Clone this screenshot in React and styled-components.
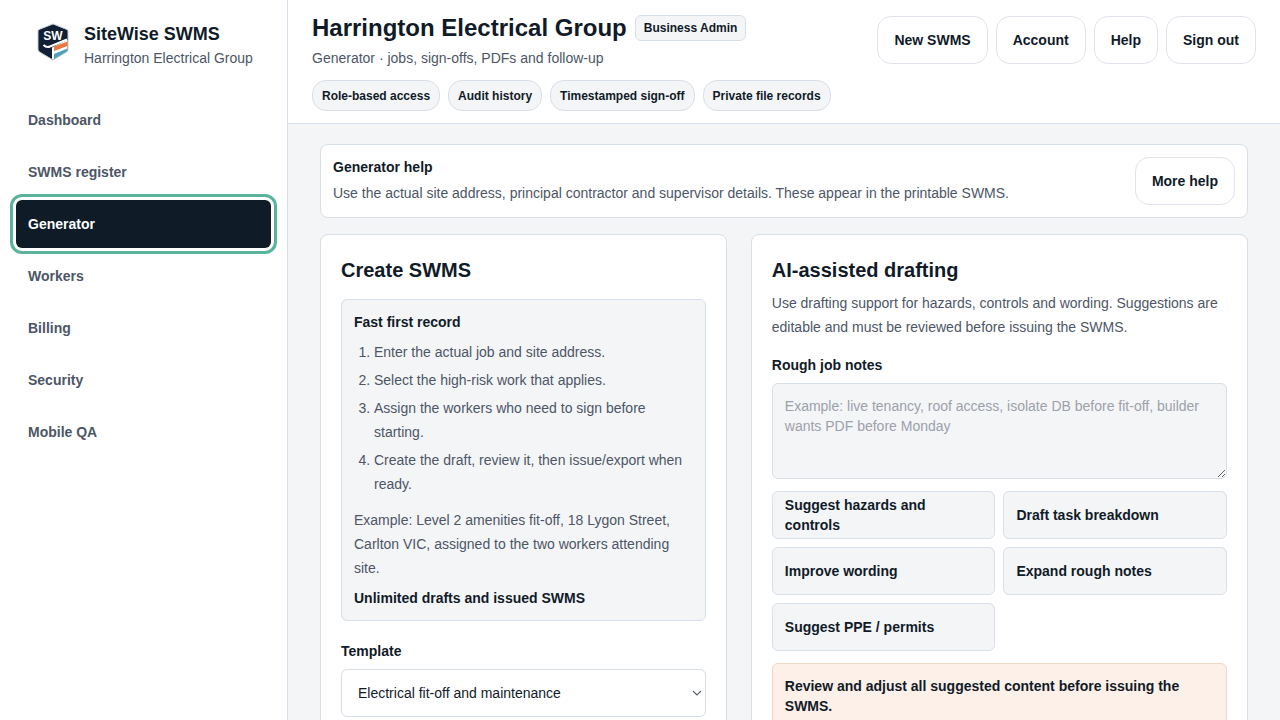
import React from "react";
import styled, { createGlobalStyle, css } from "styled-components";

const ink = "#111b28";
const muted = "#4d5666";
const line = "#d9dfe6";
const wash = "#f4f5f7";

const GlobalStyle = createGlobalStyle`
  *, *::before, *::after { box-sizing: border-box; }
  body {
    margin: 0;
    background: ${wash};
    color: ${ink};
    font-family: "Liberation Sans", Arial, Helvetica, sans-serif;
    font-size: 14px;
    line-height: 20px;
  }
  h1, h2, h3, p, ol, ul { margin: 0; padding: 0; }
  button, select, textarea { font: inherit; color: inherit; margin: 0; }
`;

const Shell = styled.div`
  display: grid;
  grid-template-columns: 288px minmax(0, 1fr);
  height: 100vh;
`;

const Sidebar = styled.aside`
  display: flex;
  flex-direction: column;
  gap: 24px;
  padding: 16px;
  background: #fff;
  border-right: 1px solid ${line};
`;

const Brand = styled.div`
  display: flex;
  align-items: center;
  gap: 12px;
  height: 56px;
  padding-left: 16px;
`;

const BrandMark = styled.svg`
  width: 40px;
  height: 48px;
  flex: none;
`;

const BrandName = styled.p`
  font-size: 18px;
  line-height: 28px;
  font-weight: 700;
`;

const Muted = styled.p`
  color: ${muted};
  line-height: ${(p) => (p.$loose ? 24 : 20)}px;
`;

const Nav = styled.nav`
  display: flex;
  flex-direction: column;
  gap: 4px;
`;

const NavLink = styled.a`
  display: flex;
  align-items: center;
  min-height: 48px;
  padding: 0 12px;
  border-radius: 6px;
  color: ${muted};
  font-weight: 700;
  text-decoration: none;
  ${(p) =>
    p.$active &&
    css`
      background: #101b28;
      color: #fff;
      outline: 3px solid #5ab39d;
      outline-offset: 3px;
    `}
`;

const Workspace = styled.div`
  min-width: 0;
  overflow-y: auto;
  scrollbar-width: none;
`;

const Header = styled.header`
  display: flex;
  flex-direction: column;
  gap: 12px;
  padding: 12px 24px;
  background: #fff;
  border-bottom: 1px solid ${line};
`;

const HeaderRow = styled.div`
  display: flex;
  align-items: center;
  justify-content: space-between;
  gap: 16px;
`;

const Heading = styled.div`
  display: flex;
  flex-direction: column;
  gap: 4px;
`;

const TitleRow = styled.div`
  display: flex;
  align-items: center;
  gap: 8px;
`;

const Title = styled.h1`
  font-size: 24px;
  line-height: 32px;
  font-weight: 700;
`;

const Badge = styled.span`
  padding: 4px 8px;
  border: 1px solid ${line};
  border-radius: 6px;
  background: ${wash};
  font-size: 12px;
  line-height: 16px;
  font-weight: 700;
`;

const PillList = styled.ul`
  display: flex;
  flex-wrap: wrap;
  gap: 8px;
  list-style: none;
`;

const Pill = styled.li`
  display: flex;
  align-items: center;
  height: 31px;
  padding: 0 9px;
  border: 1px solid ${line};
  border-radius: 14px;
  background: ${wash};
  font-size: 12px;
  font-weight: 700;
`;

const Actions = styled.div`
  display: flex;
  gap: 8px;
`;

const ActionButton = styled.button`
  height: 48px;
  padding: 0 16px;
  border: 1px solid #e0e3e9;
  border-radius: 14px;
  background: #fff;
  font-weight: 700;
  white-space: nowrap;
`;

const Main = styled.main`
  display: flex;
  flex-direction: column;
  gap: 16px;
  padding: 20px 32px;
`;

const Panel = styled.section`
  padding: ${(p) => (p.$compact ? 12 : 20)}px;
  border: 1px solid ${line};
  border-radius: 8px;
  background: #fff;
`;

const HelpRow = styled.div`
  display: flex;
  align-items: center;
  justify-content: space-between;
  gap: 16px;
`;

const Columns = styled.div`
  display: grid;
  grid-template-columns: minmax(0, 9fr) minmax(0, 11fr);
  gap: 24px;
  align-items: start;
`;

const PanelTitle = styled.h2`
  font-size: 20px;
  line-height: 30px;
  font-weight: 700;
  margin-bottom: ${(p) => p.$gap}px;
`;

const Strong = styled.h3`
  font-size: 14px;
  line-height: 20px;
  font-weight: 700;
`;

const StrongText = styled.p`
  font-weight: 700;
`;

const Callout = styled.div`
  display: flex;
  flex-direction: column;
  gap: 8px;
  padding: 12px;
  border: 1px solid ${line};
  border-radius: 6px;
  background: ${wash};
`;

const Steps = styled.ol`
  display: flex;
  flex-direction: column;
  gap: 4px;
  padding-left: 20px;
  margin-bottom: 4px;
  color: ${muted};
  line-height: 24px;
`;

const Field = styled.div`
  display: flex;
  flex-direction: column;
  gap: 8px;
  margin-top: ${(p) => p.$gap}px;
`;

const Label = styled.label`
  font-weight: 700;
`;

const SelectBox = styled.div`
  position: relative;
`;

const Select = styled.select`
  appearance: none;
  display: block;
  width: 100%;
  height: 48px;
  padding: 0 24px 0 16px;
  border: 1px solid ${line};
  border-radius: 6px;
  background: #fff;
`;

const Chevron = styled.svg`
  position: absolute;
  top: 18px;
  right: 3px;
  width: 12px;
  height: 12px;
  pointer-events: none;
`;

const Notes = styled.textarea`
  display: block;
  width: 100%;
  height: 96px;
  padding: 12px;
  border: 1px solid ${line};
  border-radius: 6px;
  background: ${wash};
  resize: vertical;
  &::placeholder { color: #9ca1aa; opacity: 1; }
`;

const Prompts = styled.div`
  display: grid;
  grid-template-columns: repeat(2, minmax(0, 1fr));
  gap: 8px;
  margin: 12px 0;
`;

const PromptButton = styled.button`
  height: 48px;
  padding: 0 12px;
  border: 1px solid ${line};
  border-radius: 6px;
  background: ${wash};
  font-weight: 700;
  text-align: left;
`;

const Warning = styled.p`
  padding: 12px;
  border: 1px solid #f3d6c5;
  border-radius: 6px;
  background: #fcf0e8;
  font-weight: 700;
`;

const navItems = ["Dashboard", "SWMS register", "Generator", "Workers", "Billing", "Security", "Mobile QA"];
const pills = ["Role-based access", "Audit history", "Timestamped sign-off", "Private file records"];
const actions = ["New SWMS", "Account", "Help", "Sign out"];
const steps = [
  "Enter the actual job and site address.",
  "Select the high-risk work that applies.",
  "Assign the workers who need to sign before starting.",
  "Create the draft, review it, then issue/export when ready.",
];
const prompts = [
  "Suggest hazards and controls",
  "Draft task breakdown",
  "Improve wording",
  "Expand rough notes",
  "Suggest PPE / permits",
];

function Logo() {
  return (
    <BrandMark viewBox="0 2 40 48" role="img" aria-label="SiteWise">
      <path d="M21 6 L35 11.500 Q36 12 36 13 V31 Q36 33 34.500 34 L21 42 L7.500 34 Q6 33 6 31 V13 Q6 12 7 11.500 Z" fill="#101f33" stroke="#c3ccd6" strokeWidth="1" />
      <path d="M20 29.500 L35.500 22 V31 Q35.500 33 34 34 L21 41.500 L20 41 Z" fill="#fff" />
      <path d="M22 28.500 L35.500 23.500 V28 L22 33 Z" fill="#e9793f" />
      <path d="M22 36 L35.500 30.500 V31 Q35.500 33 34 34 L22 41 Z" fill="#4e9fba" />
      <path d="M11.500 27 Q14.500 30 18 28.500 L35 21.500" fill="none" stroke="#fff" strokeWidth="2" />
      <text x="21" y="22" textAnchor="middle" fill="#fff" fontFamily="Liberation Sans, Arial, sans-serif" fontWeight="700" fontSize="12">SW</text>
    </BrandMark>
  );
}

export default function App() {
  return (
    <>
      <GlobalStyle />
      <Shell>
        <Sidebar>
          <Brand>
            <Logo />
            <div>
              <BrandName>SiteWise SWMS</BrandName>
              <Muted>Harrington Electrical Group</Muted>
            </div>
          </Brand>
          <Nav aria-label="Main">
            {navItems.map((item) => (
              <NavLink
                key={item}
                href="#"
                $active={item === "Generator"}
                aria-current={item === "Generator" ? "page" : undefined}
              >
                {item}
              </NavLink>
            ))}
          </Nav>
        </Sidebar>
        <Workspace>
          <Header>
            <HeaderRow>
              <Heading>
                <TitleRow>
                  <Title>Harrington Electrical Group</Title>
                  <Badge>Business Admin</Badge>
                </TitleRow>
                <Muted>Generator · jobs, sign-offs, PDFs and follow-up</Muted>
              </Heading>
              <Actions>
                {actions.map((a) => (
                  <ActionButton key={a} type="button">{a}</ActionButton>
                ))}
              </Actions>
            </HeaderRow>
            <PillList>
              {pills.map((p) => (
                <Pill key={p}>{p}</Pill>
              ))}
            </PillList>
          </Header>
          <Main>
            <Panel $compact>
              <HelpRow>
                <Heading>
                  <Strong as="h2">Generator help</Strong>
                  <Muted $loose>
                    Use the actual site address, principal contractor and supervisor details. These appear in the printable SWMS.
                  </Muted>
                </Heading>
                <ActionButton type="button">More help</ActionButton>
              </HelpRow>
            </Panel>
            <Columns>
              <Panel>
                <PanelTitle $gap={14}>Create SWMS</PanelTitle>
                <Callout>
                  <Strong>Fast first record</Strong>
                  <Steps>
                    {steps.map((s) => (
                      <li key={s}>{s}</li>
                    ))}
                  </Steps>
                  <Muted $loose>
                    Example: Level 2 amenities fit-off, 18 Lygon Street, Carlton VIC, assigned to the two workers attending site.
                  </Muted>
                  <StrongText>Unlimited drafts and issued SWMS</StrongText>
                </Callout>
                <Field $gap={20}>
                  <Label htmlFor="template">Template</Label>
                  <SelectBox>
                    <Select id="template">
                      <option>Electrical fit-off and maintenance</option>
                    </Select>
                    <Chevron viewBox="0 0 12 12" aria-hidden="true">
                      <path d="M2 4 L6 8 L10 4" fill="none" stroke="#59606b" strokeWidth="1.1" />
                    </Chevron>
                  </SelectBox>
                </Field>
              </Panel>
              <Panel>
                <PanelTitle $gap={6}>AI-assisted drafting</PanelTitle>
                <Muted $loose>
                  Use drafting support for hazards, controls and wording. Suggestions are editable and must be reviewed before issuing the SWMS.
                </Muted>
                <Field $gap={16}>
                  <Label htmlFor="notes">Rough job notes</Label>
                  <Notes
                    id="notes"
                    placeholder="Example: live tenancy, roof access, isolate DB before fit-off, builder wants PDF before Monday"
                  />
                </Field>
                <Prompts>
                  {prompts.map((p) => (
                    <PromptButton key={p} type="button">{p}</PromptButton>
                  ))}
                </Prompts>
                <Warning>Review and adjust all suggested content before issuing the SWMS.</Warning>
              </Panel>
            </Columns>
          </Main>
        </Workspace>
      </Shell>
    </>
  );
}
